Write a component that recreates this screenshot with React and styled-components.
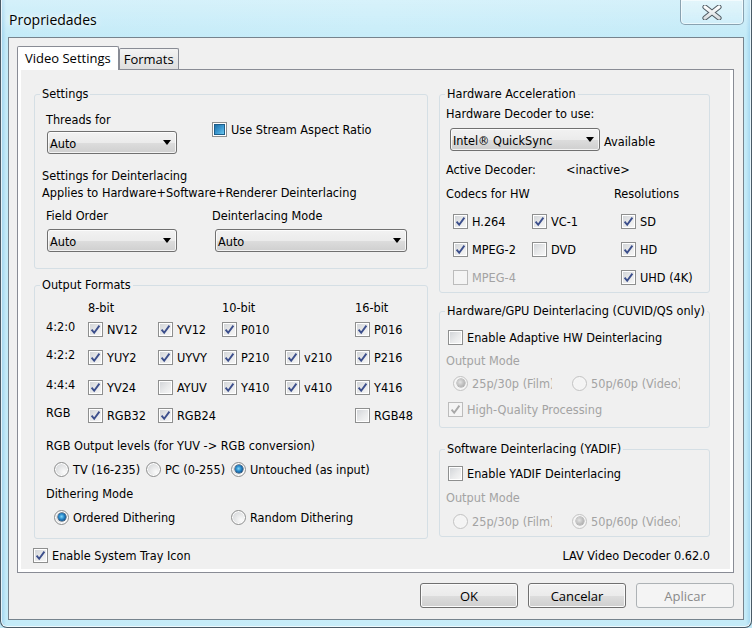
import React from "react";
import styled, { createGlobalStyle } from "styled-components";

const UI = `"Open Sans", "Noto Sans", sans-serif`;
const DLG = `"DejaVu Sans Condensed", "DejaVu Sans", sans-serif`;

const GlobalStyle = createGlobalStyle`
  html, body { margin: 0; padding: 0; }
  body { width: 752px; height: 628px; overflow: hidden; background: #bfe7f6; }
  * { box-sizing: border-box; }
`;

const Window = styled.div`
  width: 752px;
  height: 628px;
  display: flex;
  flex-direction: column;
  padding: 0 7px 7px 7px;
  border: 1px solid #4a5a66;
  border-top: none;
  border-radius: 0 0 7px 7px;
  background:
    linear-gradient(180deg, rgba(255, 255, 255, 0.28) 0, rgba(255, 255, 255, 0) 36px),
    linear-gradient(90deg, #9fd3ee 0, #c4ebf8 5px, #c8edf9 50%, #c4ebf8 calc(100% - 5px), #9fd3ee 100%);
  box-shadow: inset 1px 0 0 rgba(255, 255, 255, 0.7), inset -1px 0 0 rgba(255, 255, 255, 0.7),
    inset 0 -1px 0 rgba(255, 255, 255, 0.7);
`;

const TitleBar = styled.div`
  height: 37px;
  flex: none;
  display: flex;
  justify-content: space-between;
  align-items: flex-start;
`;

const Title = styled.div`
  margin: 10px 0 0 1px;
  font-family: ${UI};
  font-size: 14px;
  line-height: 20px;
  color: #000;
  text-shadow: 0 0 6px rgba(255, 255, 255, 0.95), 0 0 10px rgba(255, 255, 255, 0.8);
`;

const CloseButton = styled.div`
  width: 64px;
  height: 25px;
  display: flex;
  align-items: center;
  justify-content: center;
  border: 1px solid rgba(70, 95, 115, 0.55);
  border-top: none;
  border-radius: 0 0 5px 5px;
  background: linear-gradient(180deg, rgba(255, 255, 255, 0.35), rgba(255, 255, 255, 0.12));
  box-shadow: inset 0 0 0 1px rgba(255, 255, 255, 0.55);
`;

const Client = styled.div`
  flex: 1;
  display: flex;
  flex-direction: column;
  background: #f0f0f0;
  border: 1px solid #76838d;
  padding: 8px 9px 0 8px;
`;

const TabStrip = styled.div`
  height: 24px;
  flex: none;
  display: flex;
  align-items: flex-end;
  margin-bottom: -1px;
  position: relative;
  z-index: 1;
`;

const Tab = styled.div`
  display: flex;
  align-items: center;
  font-family: ${UI};
  font-size: 13px;
  color: #000;
  white-space: nowrap;
  border: 1px solid #898c95;
  border-bottom: none;
  border-radius: 2px 2px 0 0;
  height: ${(p) => (p.$active ? 24 : 21)}px;
  margin-bottom: ${(p) => (p.$active ? 0 : 1)}px;
  padding: 0 ${(p) => (p.$active ? 7 : 4)}px 1px;
  background: ${(p) =>
    p.$active ? "#ffffff" : "linear-gradient(180deg, #f3f3f3 0%, #e9e9e9 50%, #dedede 100%)"};
`;

const TabPanel = styled.div`
  flex: 1;
  display: flex;
  border: 1px solid #898c95;
  background: #ffffff;
  padding: 0 3px 3px 3px;
`;

const Page = styled.div`
  flex: 1;
  display: grid;
  grid-template-columns: 394px 271px;
  column-gap: 11px;
  row-gap: 8px;
  align-content: start;
  padding: 16px 0 0 13px;
  background: #f0f0f0;
  font-family: ${DLG};
  font-size: 12.6px;
  color: #000;
`;

const Column = styled.div`
  display: flex;
  flex-direction: column;
`;

const Group = styled.fieldset`
  margin: ${(p) => p.$mt || 0}px 0 0 0;
  padding: 0;
  min-width: 0;
  height: ${(p) => p.$h}px;
  border: 1px solid #d5dfe5;
  border-radius: 3px;
`;

const Legend = styled.legend`
  margin-left: 5px;
  padding: 0 2px;
  line-height: 16px;
  white-space: nowrap;
`;

/* a 16px text line whose glyphs sit one pixel low, as Tahoma does */
const Line = styled.div`
  height: 16px;
  line-height: 18px;
  white-space: nowrap;
  margin: ${(p) => p.$mt || 0}px 0 0 ${(p) => p.$ml || 0}px;
  color: ${(p) => (p.$disabled ? "#a3a3a3" : "#000")};
  justify-self: ${(p) => (p.$end ? "end" : "auto")};
`;

const Caption = styled.span`
  height: 16px;
  line-height: 18px;
`;

const TopRow = styled.div`
  display: flex;
  align-items: flex-start;
  margin: 9px 0 0 11px;
`;

const StackCell = styled.div`
  width: ${(p) => p.$w}px;
  display: flex;
  flex-direction: column;
`;

const FieldGrid = styled.div`
  display: grid;
  grid-template-columns: ${(p) => p.$cols};
  row-gap: ${(p) => p.$rowGap || 0}px;
  align-items: center;
  margin: ${(p) => p.$mt || 0}px 0 0 ${(p) => p.$ml || 0}px;
`;

/* ---------- combo box ---------- */
const SelectBox = styled.div`
  width: ${(p) => p.$w}px;
  height: 23px;
  flex: none;
  display: flex;
  align-items: center;
  justify-content: space-between;
  margin: ${(p) => p.$mt || 0}px 0 0 ${(p) => p.$ml || 0}px;
  padding: 0 5px 0 2px;
  border: 1px solid #707070;
  border-radius: 3px;
  background: linear-gradient(180deg, #f2f2f2 0%, #ebebeb 50%, #dddddd 51%, #cfcfcf 100%);
  box-shadow: inset 0 0 0 1px rgba(255, 255, 255, 0.75);
  white-space: nowrap;
`;

const Arrow = styled.span`
  width: 0;
  height: 0;
  border-left: 4px solid transparent;
  border-right: 4px solid transparent;
  border-top: 5px solid #000;
`;

function Select({ value, w, ml, mt }) {
  return (
    <SelectBox $w={w} $ml={ml} $mt={mt}>
      <Caption>{value}</Caption>
      <Arrow />
    </SelectBox>
  );
}

/* ---------- check box ---------- */
const CheckLabel = styled.div`
  display: flex;
  align-items: center;
  gap: 4px;
  height: 16px;
  white-space: nowrap;
  color: ${(p) => (p.$disabled ? "#a3a3a3" : "#000")};
  margin: ${(p) => p.$mt || 0}px 0 0 ${(p) => p.$ml || 0}px;
`;

const Box = styled.span`
  width: 15px;
  height: 15px;
  flex: none;
  display: flex;
  align-items: center;
  justify-content: center;
  border: 1px solid ${(p) => (p.$disabled ? "#bcbcbc" : "#8e8f8f")};
  background: ${(p) =>
    p.$disabled ? "#f4f4f4" : "linear-gradient(135deg, #cfd2d6 0%, #e9eaeb 55%, #f8f8f8 100%)"};
  box-shadow: inset 0 0 0 1px ${(p) => (p.$disabled ? "#f4f4f4" : "#ffffff")};
`;

const Mixed = styled.span`
  width: 11px;
  height: 11px;
  border: 1px solid #1d5e8a;
  background: linear-gradient(135deg, #1f6fa6 0%, #3a97cf 50%, #6cc6ec 100%);
`;

function CheckMark({ disabled }) {
  return (
    <svg width="13" height="13" viewBox="0 0 13 13">
      <path
        d="M2.6 6.6 L5.2 9.8 L10.4 2.6"
        fill="none"
        stroke={disabled ? "#a8a8a8" : "#3c4f8c"}
        strokeWidth="1.9"
      />
    </svg>
  );
}

function Check({ label, checked, mixed, disabled, ml, mt }) {
  return (
    <CheckLabel $disabled={disabled} $ml={ml} $mt={mt}>
      <Box $disabled={disabled}>
        {mixed ? <Mixed /> : checked ? <CheckMark disabled={disabled} /> : null}
      </Box>
      {label && <Caption>{label}</Caption>}
    </CheckLabel>
  );
}

/* ---------- radio ---------- */
const RadioLabel = styled.div`
  display: flex;
  align-items: center;
  gap: 4px;
  height: 16px;
  white-space: nowrap;
  overflow: hidden;
  width: ${(p) => (p.$w ? `${p.$w}px` : "auto")};
  color: ${(p) => (p.$disabled ? "#a3a3a3" : "#000")};
`;

const Circle = styled.span`
  width: 15px;
  height: 15px;
  flex: none;
  border-radius: 50%;
  display: flex;
  align-items: center;
  justify-content: center;
  border: 1px solid ${(p) => (p.$disabled ? "#c2c2c2" : "#8e8f8f")};
  background: ${(p) =>
    p.$disabled ? "#f4f4f4" : "radial-gradient(circle at 70% 70%, #fbfbfb 0%, #e6e7e8 45%, #cdd0d4 100%)"};
  box-shadow: inset 0 0 0 1px ${(p) => (p.$disabled ? "#f6f6f6" : "#ffffff")};

  &::after {
    content: "";
    display: ${(p) => (p.$checked ? "block" : "none")};
    width: 8px;
    height: 8px;
    border-radius: 50%;
    background: ${(p) =>
      p.$disabled
        ? "radial-gradient(circle at 40% 40%, #e4e4e4 0%, #bdbdbd 55%, #9c9c9c 100%)"
        : "radial-gradient(circle at 45% 45%, #7fd6f8 0%, #2a8bcc 40%, #0f4c85 75%, #0a2c52 100%)"};
    box-shadow: 0 0 0 0.5px ${(p) => (p.$disabled ? "#9a9a9a" : "#0d2a48")};
  }
`;

function Radio({ label, checked, disabled, w }) {
  return (
    <RadioLabel $disabled={disabled} $w={w}>
      <Circle $checked={checked} $disabled={disabled} />
      <Caption>{label}</Caption>
    </RadioLabel>
  );
}

/* ---------- output format table ---------- */
const FormatRow = styled.div`
  display: grid;
  grid-template-columns: 42px 70px 64px 63px 70px auto;
  align-items: center;
  height: 16px;
  line-height: 18px;
  white-space: nowrap;
  margin: ${(p) => p.$mt}px 0 0 11px;
`;

const RowLabel = styled.span`
  margin-top: -4px;
`;

const formatRows = [
  { name: "4:2:0", mt: 6, cells: [["NV12", 1], ["YV12", 1], ["P010", 1], null, ["P016", 1]] },
  { name: "4:2:2", mt: 12, cells: [["YUY2", 1], ["UYVY", 1], ["P210", 1], ["v210", 1], ["P216", 1]] },
  { name: "4:4:4", mt: 14, cells: [["YV24", 1], ["AYUV", 0], ["Y410", 1], ["v410", 1], ["Y416", 1]] },
  { name: "RGB", mt: 12, cells: [["RGB32", 1], ["RGB24", 1], null, null, ["RGB48", 0]] },
];

/* ---------- buttons ---------- */
const Footer = styled.div`
  flex: none;
  display: flex;
  justify-content: flex-end;
  gap: 10px;
  padding: 10px 0 11px;
`;

const Button = styled.button`
  width: 98px;
  height: 25px;
  padding: 0;
  font-family: ${UI};
  font-size: 13px;
  color: ${(p) => (p.disabled ? "#8a8a8a" : "#000")};
  border: 1px solid ${(p) => (p.disabled ? "#adb2b5" : "#707070")};
  border-radius: 3px;
  background: ${(p) =>
    p.disabled ? "#f4f4f4" : "linear-gradient(180deg, #f2f2f2 0%, #ebebeb 50%, #dddddd 51%, #cfcfcf 100%)"};
  box-shadow: ${(p) => (p.disabled ? "none" : "inset 0 0 0 1px #fbfbfb")};
`;

function CloseGlyph() {
  return (
    <svg width="20" height="15" viewBox="0 0 20 15">
      <defs>
        <linearGradient id="xg" x1="0" y1="0" x2="0" y2="1">
          <stop offset="0" stopColor="#ffffff" />
          <stop offset="1" stopColor="#d9dde0" />
        </linearGradient>
      </defs>
      <path d="M3 2 L17 13 M17 2 L3 13" stroke="#4f5a62" strokeWidth="5.2" strokeLinecap="round" />
      <path d="M3 2 L17 13 M17 2 L3 13" stroke="url(#xg)" strokeWidth="3.2" strokeLinecap="round" />
    </svg>
  );
}

export default function App() {
  return (
    <Window>
      <GlobalStyle />
      <TitleBar>
        <Title>Propriedades</Title>
        <CloseButton>
          <CloseGlyph />
        </CloseButton>
      </TitleBar>
      <Client>
        <TabStrip>
          <Tab $active>Video Settings</Tab>
          <Tab>Formats</Tab>
        </TabStrip>
        <TabPanel>
          <Page>
            <Column>
              <Group $h={183}>
                <Legend>Settings</Legend>
                <TopRow>
                  <StackCell $w={166}>
                    <Line>Threads for</Line>
                    <Select value="Auto" w={130} ml={1} mt={4} />
                  </StackCell>
                  <Check label="Use Stream Aspect Ratio" mixed mt={10} />
                </TopRow>
                <Line $mt={13} $ml={7}>Settings for Deinterlacing</Line>
                <Line $mt={1} $ml={7}>Applies to Hardware+Software+Renderer Deinterlacing</Line>
                <FieldGrid $cols="166px auto" $rowGap={6} $mt={7} $ml={11}>
                  <Line>Field Order</Line>
                  <Line>Deinterlacing Mode</Line>
                  <Select value="Auto" w={130} ml={1} />
                  <Select value="Auto" w={192} ml={3} />
                </FieldGrid>
              </Group>

              <Group $h={262} $mt={8}>
                <Legend>Output Formats</Legend>
                <FormatRow $mt={6}>
                  <span />
                  <span>8-bit</span>
                  <span />
                  <span>10-bit</span>
                  <span />
                  <span>16-bit</span>
                </FormatRow>
                {formatRows.map((r) => (
                  <FormatRow key={r.name} $mt={r.mt}>
                    <RowLabel>{r.name}</RowLabel>
                    {r.cells.map((c, i) =>
                      c ? <Check key={i} label={c[0]} checked={!!c[1]} /> : <span key={i} />
                    )}
                  </FormatRow>
                ))}
                <Line $mt={14} $ml={11}>RGB Output levels (for YUV -&gt; RGB conversion)</Line>
                <FieldGrid $cols="92px 85px auto" $mt={8} $ml={19}>
                  <Radio label="TV (16-235)" />
                  <Radio label="PC (0-255)" />
                  <Radio label="Untouched (as input)" checked />
                </FieldGrid>
                <Line $mt={8} $ml={11}>Dithering Mode</Line>
                <FieldGrid $cols="177px auto" $mt={8} $ml={19}>
                  <Radio label="Ordered Dithering" checked />
                  <Radio label="Random Dithering" />
                </FieldGrid>
              </Group>
            </Column>

            <Column>
              <Group $h={207}>
                <Legend>Hardware Acceleration</Legend>
                <Line $mt={3} $ml={6}>Hardware Decoder to use:</Line>
                <FieldGrid $cols="154px auto" $mt={7} $ml={10}>
                  <Select value="Intel® QuickSync" w={150} />
                  <Line $mt={3}>Available</Line>
                </FieldGrid>
                <FieldGrid $cols="120px auto" $mt={10} $ml={6}>
                  <Line>Active Decoder:</Line>
                  <Line>&lt;inactive&gt;</Line>
                </FieldGrid>
                <FieldGrid $cols="168px auto" $mt={8} $ml={6}>
                  <Line>Codecs for HW</Line>
                  <Line>Resolutions</Line>
                </FieldGrid>
                <FieldGrid $cols="79px 89px auto" $rowGap={12} $mt={12} $ml={13}>
                  <Check label="H.264" checked />
                  <Check label="VC-1" checked />
                  <Check label="SD" checked />
                  <Check label="MPEG-2" checked />
                  <Check label="DVD" />
                  <Check label="HD" checked />
                  <Check label="MPEG-4" disabled />
                  <span />
                  <Check label="UHD (4K)" checked />
                </FieldGrid>
              </Group>

              <Group $h={125} $mt={10}>
                <Legend>Hardware/GPU Deinterlacing (CUVID/QS only)</Legend>
                <Check label="Enable Adaptive HW Deinterlacing" mt={10} ml={8} />
                <Line $mt={7} $ml={6} $disabled>Output Mode</Line>
                <FieldGrid $cols="119px auto" $mt={7} $ml={13}>
                  <Radio label="25p/30p (Film)" checked disabled w={99} />
                  <Radio label="50p/60p (Video)" disabled w={108} />
                </FieldGrid>
                <Check label="High-Quality Processing" checked disabled mt={10} ml={8} />
              </Group>

              <Group $h={96} $mt={13}>
                <Legend>Software Deinterlacing (YADIF)</Legend>
                <Check label="Enable YADIF Deinterlacing" mt={8} ml={8} />
                <Line $mt={8} $ml={6} $disabled>Output Mode</Line>
                <FieldGrid $cols="119px auto" $mt={8} $ml={13}>
                  <Radio label="25p/30p (Film)" disabled w={99} />
                  <Radio label="50p/60p (Video)" checked disabled w={108} />
                </FieldGrid>
              </Group>
            </Column>

            <Check label="Enable System Tray Icon" checked ml={-1} />
            <Line $end>LAV Video Decoder 0.62.0</Line>
          </Page>
        </TabPanel>
        <Footer>
          <Button>OK</Button>
          <Button>Cancelar</Button>
          <Button disabled>Aplicar</Button>
        </Footer>
      </Client>
    </Window>
  );
}
